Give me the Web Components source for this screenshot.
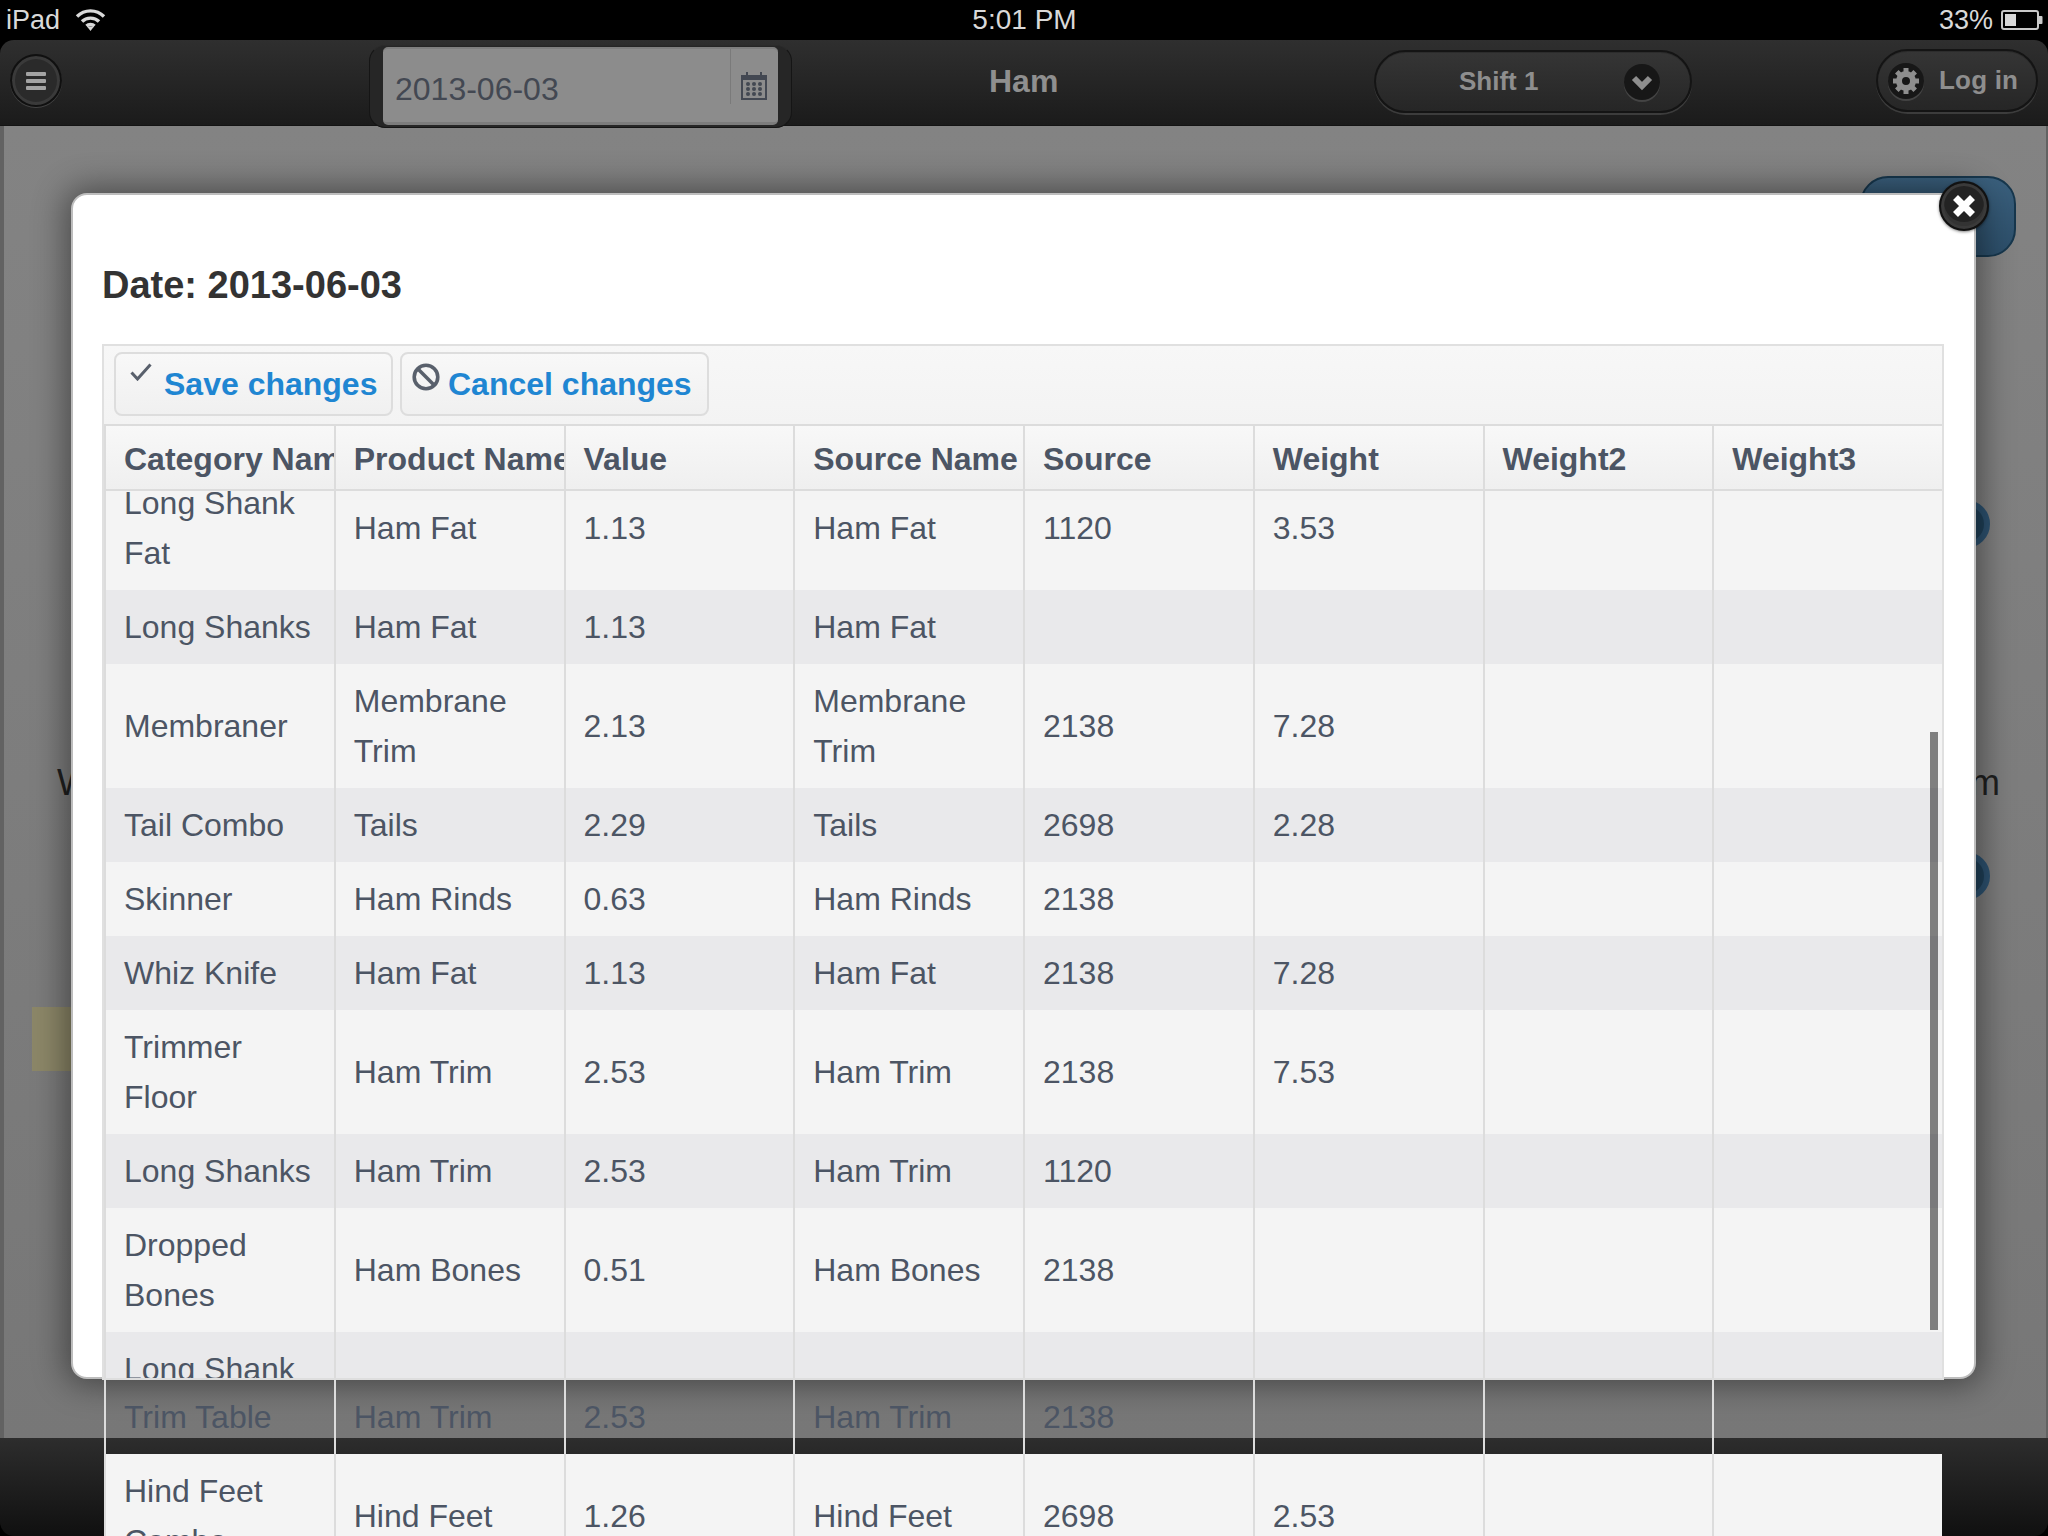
<!DOCTYPE html>
<html><head><meta charset="utf-8"><title>Ham</title>
<style>
html,body{margin:0;padding:0;background:#000;width:2048px;height:1536px;overflow:hidden;font-family:"Liberation Sans",Arial,sans-serif}
</style></head>
<body>
<ham-app>
  <status-bar slot="status"></status-bar>
  <app-header slot="header"></app-header>
  <behind-page slot="page"></behind-page>
  <data-modal slot="modal" heading="Date: 2013-06-03"></data-modal>
</ham-app>
<script>
function def(name, css, html, init){
  customElements.define(name, class extends HTMLElement{
    constructor(){super();const r=this.attachShadow({mode:'open'});r.innerHTML='<style>'+css+'</style>'+(typeof html==='function'?html(this):html);}
    connectedCallback(){ if(init) init(this); }
  });
}
def('ham-app',`
:host{display:flex;flex-direction:column;width:2048px;height:1536px;position:relative;overflow:hidden;background:#000}
.foot{height:98px;flex:none;background:linear-gradient(#2d2d2d,#101010);border-radius:0 0 14px 14px}
::slotted([slot=page]){flex:1;min-height:0}
`,`<slot name="status"></slot><slot name="header"></slot><slot name="page"></slot><div class="foot"></div><slot name="modal"></slot>`);

def('status-bar',`
:host{display:flex;align-items:center;height:40px;flex:none;background:#000;color:#d9d9d9;font-size:27px;padding:0 5px 0 6px;box-sizing:border-box;position:relative}
.l,.r{display:flex;align-items:center}
.l{gap:15px;flex:1}
.t{font-size:28px;flex:none;width:106px;text-align:center;white-space:nowrap;font-weight:400}
.r{flex:1;justify-content:flex-end;gap:8px}
svg{display:block}
`,`<div class="l"><span>iPad</span>
<svg width="31" height="24" viewBox="0 0 31 24" fill="none" stroke="#d9d9d9" stroke-width="3.4"><path d="M2 8.5C9.5 1 21.5 1 29 8.5"/><path d="M7 13.5C11.5 9 19.5 9 24 13.5"/><path d="M11.5 18C13.5 16 17.5 16 19.5 18" /><path d="M12 18.5L15.5 23L19 18.5Z" fill="#d9d9d9" stroke="none"/></svg></div>
<span class="t">5:01 PM</span>
<div class="r"><span>33%</span>
<svg width="42" height="20" viewBox="0 0 42 20"><rect x="1" y="1" width="36" height="18" rx="2" fill="none" stroke="#c9c9c9" stroke-width="2"/><rect x="4" y="4" width="11" height="12" fill="#d9d9d9"/><path d="M38 6h2.500a1 1 0 0 1 1 1v6a1 1 0 0 1-1 1H38z" fill="#c9c9c9"/></svg></div>`);

def('pill-well',`
:host{display:flex;align-items:center;box-sizing:border-box;height:63px;border-radius:32px;border:2px solid #141414;background:linear-gradient(#353535,#262626);box-shadow:0 2px 0 #3c3c3c,inset 0 1px 0 #2c2c2c;font-weight:700;font-size:26px;color:#8e8e8e;flex:none;white-space:nowrap}
`,`<slot></slot>`);

def('app-header',`
:host{display:flex;align-items:flex-start;position:relative;z-index:1;height:86px;flex:none;box-sizing:border-box;background:linear-gradient(#2f2f2f,#1b1b1b);border-radius:14px 14px 0 0;border-bottom:1px solid #141414}
.menu{width:52px;height:53px;border-radius:50%;margin:14px 0 0 10px;flex:none;background:#2a2a2a;border:2px solid #101010;box-sizing:border-box;box-shadow:0 1px 0 #444,inset 0 0 0 3px #3a3a3a;display:flex;align-items:center;justify-content:center}
date-field{margin:5px 0 0 307px}
h1{margin:24px 0 0 197px;width:69px;font-size:32px;line-height:34px;color:#8f8f8f;font-weight:700;flex:none}
.shift{margin:10px 0 0 316px;width:318px;padding:0 30px 0 83px;gap:0;justify-content:space-between}
.login{margin:9px 0 0 184px;width:162px;padding-left:10px;gap:15px;letter-spacing:.2px}
.ci{width:36px;height:36px;border-radius:50%;background:#171717;box-shadow:0 2px 0 #444;display:flex;align-items:center;justify-content:center;flex:none}
svg{display:block}
`,`<div class="menu"><svg width="20" height="20" viewBox="0 0 20 20" fill="#a3a3a3"><rect y="1" width="20" height="4" rx="1"/><rect y="8" width="20" height="4" rx="1"/><rect y="15" width="20" height="4" rx="1"/></svg></div>
<date-field></date-field>
<h1>Ham</h1>
<pill-well class="shift"><span>Shift 1</span><span class="ci"><svg width="22" height="18" viewBox="0 0 22 18" fill="none" stroke="#8e8e8e" stroke-width="6"><path d="M3 5l8 8 8-8"/></svg></span></pill-well>
<pill-well class="login"><span class="ci"><svg width="28" height="28" viewBox="0 0 28 28"><circle cx="14" cy="14" r="7" fill="none" stroke="#8e8e8e" stroke-width="6"/><g stroke="#8e8e8e" stroke-width="5"><path d="M14 1v6M14 21v6M1 14h6M21 14h6M4.800 4.800l4.200 4.200M19 19l4.200 4.200M4.800 23.200l4.200-4.200M19 9l4.200-4.200"/></g></svg></span><span>Log in</span></pill-well>`);

def('date-field',`
:host{display:block;flex:none;box-sizing:border-box;width:423px;height:83px;padding:1px 13px 2px;border-radius:16px;background:#262626;border:1px solid #151515;border-top-color:#2b2b2b}
.box{display:flex;align-items:stretch;height:100%;box-sizing:border-box;background:#8c8c8c;border-top:2px solid #7f7f7f;border-bottom:3px solid #7c7c7c;border-radius:5px;padding-left:12px;color:#434852;font-size:32px}
.v{flex:1;padding-top:22px}
.i{width:48px;margin-bottom:18px;border-left:1px solid #7a7a7a;padding:21px 0 0 9px;box-sizing:border-box}
svg{display:block}
`,`<div class="box"><div class="v">2013-06-03</div><div class="i"><svg width="28" height="30" viewBox="0 0 28 30" fill="#434852"><path d="M1 5h5V2h2v3h12V2h2v3h5v25H1zM3 10v18h22V10z"/><g><circle cx="8" cy="14" r="2"/><circle cx="14" cy="14" r="2"/><circle cx="20" cy="14" r="2"/><circle cx="8" cy="19" r="2"/><circle cx="14" cy="19" r="2"/><circle cx="20" cy="19" r="2"/><circle cx="8" cy="24" r="2"/><circle cx="14" cy="24" r="2"/><circle cx="20" cy="24" r="2"/></g></svg></div></div>`);

def('behind-page',`
:host{display:block;box-sizing:border-box;background:linear-gradient(#838383,#777);border-left:4px solid #626262;border-right:2px solid #626262;padding-top:50px;font-size:36px;color:#1f1f1f}
.blue{width:156px;height:81px;margin-left:auto;margin-right:30px;box-sizing:border-box;border:2px solid #17374d;border-radius:28px;background:linear-gradient(#3a5f7c,#2c4e69)}
.dot{width:48px;height:48px;border-radius:50%;box-sizing:border-box;margin-left:auto;margin-right:56px;background:#1f4058;border:6px solid #2d5270}
.d1{margin-top:243px}
.row{display:flex;justify-content:space-between;margin:213px 46px 0 53px;line-height:44px}
.d2{margin-top:47px}
.yellow{width:160px;height:64px;margin:107px 0 0 28px;background:#8c8768}
`,`<div class="blue"></div><div class="dot d1"></div><div class="row"><span>Weight</span><span>Term</span></div><div class="dot d2"></div><div class="yellow"></div>`);

def('tool-button',`
:host{display:inline-flex;align-items:center;box-sizing:border-box;height:64px;border:2px solid #ddd;border-radius:8px;background:linear-gradient(#f8f8f8,#f0f0f0);font-size:32px;font-weight:700;color:#1f86d2;white-space:nowrap;flex:none}
`,`<slot></slot>`);

const COLS=['Category Name','Product Name','Value','Source Name','Source','Weight','Weight2','Weight3'];
const ROWS=[
['Long Shank Fat','Ham Fat','1.13','Ham Fat','1120','3.53'],
['Long Shanks','Ham Fat','1.13','Ham Fat','',''],
['Membraner','Membrane Trim','2.13','Membrane Trim','2138','7.28'],
['Tail Combo','Tails','2.29','Tails','2698','2.28'],
['Skinner','Ham Rinds','0.63','Ham Rinds','2138',''],
['Whiz Knife','Ham Fat','1.13','Ham Fat','2138','7.28'],
['Trimmer Floor','Ham Trim','2.53','Ham Trim','2138','7.53'],
['Long Shanks','Ham Trim','2.53','Ham Trim','1120',''],
['Dropped Bones','Ham Bones','0.51','Ham Bones','2138',''],
['Long Shank Trim Table','Ham Trim','2.53','Ham Trim','2138','']
];
def('grid-row',`
:host{display:grid;grid-template-columns:repeat(8,1fr);color:#4c5564;font-size:32px;line-height:50px;background:var(--row,#f4f4f4)}
div{box-sizing:border-box;border-left:2px solid #dcdcdc;padding:12px 18px;display:flex;align-items:center;min-width:0}
:host([head]){font-weight:700;background:linear-gradient(#f8f8f8,#efefef);white-space:nowrap}
:host([head]) div{padding:8px 0 6px 18px;overflow:hidden}
:host([head]) span{display:block}
`,'',el=>{
  const vals=JSON.parse(el.getAttribute('cells'));
  const s=el.shadowRoot.querySelector('style').outerHTML;
  el.shadowRoot.innerHTML=s+Array.from({length:8},(_,i)=>'<div><span>'+(vals[i]||'')+'</span></div>').join('');
});

def('data-modal',`
:host{display:flex;flex-direction:column;position:absolute;left:71px;top:193px;width:1905px;height:1186px;box-sizing:border-box;background:#fff;border:2px solid #bdbdbd;border-radius:16px;box-shadow:0 0 32px 6px rgba(0,0,0,.42);padding:0 30px 0 29px;z-index:2}
h2{margin:0;height:149px;box-sizing:border-box;padding-top:68px;font-size:38px;line-height:44px;color:#333;font-weight:700;flex:none}
.wrap{position:relative;flex:none;height:1036px;box-sizing:border-box;border:2px solid #e0e0e0;border-bottom:0;display:flex;flex-direction:column;background:#f6f6f6}
.tools{display:flex;gap:7px;height:78px;flex:none;box-sizing:border-box;padding:6px 0 0 10px;background:linear-gradient(#f7f7f7,#f3f3f3)}
.save{width:279px;padding-left:14px;gap:12px}
.cancel{width:309px;padding-left:10px;gap:8px}
svg{display:block;flex:none}
.save svg{margin-top:-24px}
.cancel svg{margin-top:-14px}
.head{flex:none;border-top:2px solid #dcdcdc;border-bottom:2px solid #dcdcdc;height:67px;box-sizing:border-box;overflow:hidden}
.body{flex:1;min-height:0;overflow:hidden;position:relative;background:#f4f4f4}
.inner{margin-top:-25px}
.even{--row:#e9e9eb}
.bar{position:absolute;right:4px;top:241px;width:8px;height:598px;background:rgba(0,0,0,.48)}
.edge{position:absolute;left:-2px;right:-2px;bottom:0;height:2px;background:#dedede;z-index:1}
.spill{flex:none;width:1838px;margin-left:2px;--row:transparent}
.hind{--row:#f4f4f4;margin-top:0}
.close{position:absolute;left:1866px;top:-14px;width:50px;height:50px;box-sizing:border-box;border-radius:50%;background:#232323;border:2px solid #111;box-shadow:inset 0 0 0 3px #3a3a3a,inset 0 -4px 0 3px #333,0 1px 3px rgba(0,0,0,.5);display:flex;align-items:center;justify-content:center;z-index:3}
`,el=>{
  const row=(c,cl='')=>`<grid-row class="${cl}" cells='${JSON.stringify(c)}'></grid-row>`;
  return `<h2>${el.getAttribute('heading')}</h2>
  <div class="wrap">
    <div class="tools">
      <tool-button class="save"><svg width="22" height="18" viewBox="0 0 22 18" fill="none" stroke="#59606c" stroke-width="3"><path d="M1.500 9.500L7.500 16 20.500 1.500"/></svg><span>Save changes</span></tool-button>
      <tool-button class="cancel"><svg width="28" height="28" viewBox="0 0 28 28" fill="none" stroke="#59606c" stroke-width="3.600"><circle cx="14" cy="14" r="11.800"/><path d="M6 6l16 16"/></svg><span>Cancel changes</span></tool-button>
    </div>
    <div class="head"><grid-row head cells='${JSON.stringify(COLS)}'></grid-row></div>
    <div class="body"><div class="inner">${ROWS.map((r,i)=>row(r,i%2?'even':'')).join('')}</div><div class="bar"></div></div>
    <div class="edge"></div>
  </div>
  <div class="spill">
    ${row(['Trim Table','Ham Trim','2.53','Ham Trim','2138',''],'trim')}
    ${row(['Hind Feet Combo','Hind Feet','1.26','Hind Feet','2698','2.53'],'hind')}
  </div>
  <div class="close"><svg width="24" height="24" viewBox="0 0 24 24" stroke="#fff" stroke-width="7"><path d="M3.500 3.500l17 17M20.500 3.500l-17 17"/></svg></div>`;
});
</script>
</body></html>
